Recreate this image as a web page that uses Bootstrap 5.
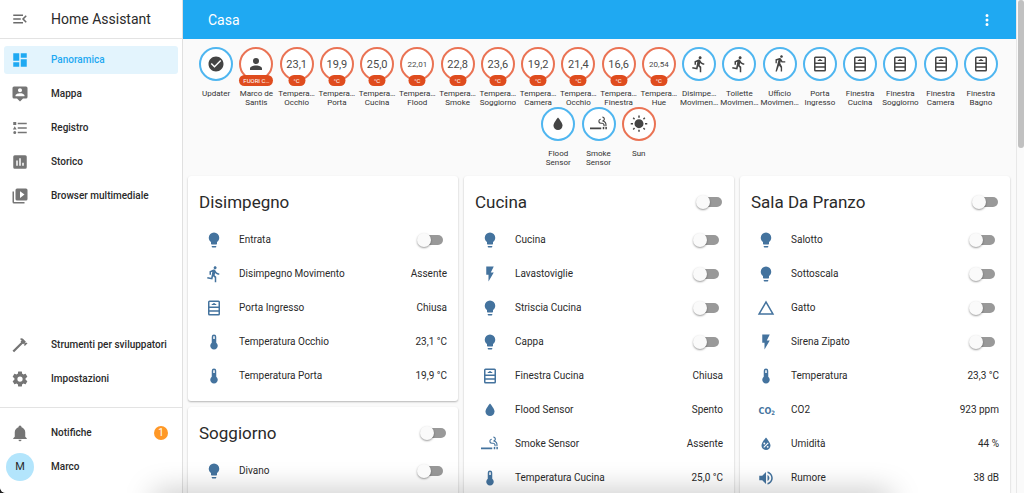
<!DOCTYPE html>
<html lang="it">
<head>
<meta charset="utf-8">
<meta name="viewport" content="width=device-width, initial-scale=1">
<title>Casa – Home Assistant</title>
<link rel="stylesheet" href="https://cdn.jsdelivr.net/npm/bootstrap@5.3.0/dist/css/bootstrap.min.css">
<style>
  :root { --ha-blue: #1fa9f2; --ha-text: #2a2a2a; --ha-icon: #44739e; --ha-red: #df4c1e; }
  body { font: 400 10px/14px Roboto, "Noto Sans", sans-serif; color: var(--ha-text); background: #222; }
  .app { background: #fafafa; border-bottom-left-radius: 6px; }
  .mdi { width: 18px; height: 18px; fill: currentColor; flex: none; }

  .side { width: 183px; flex: none; background: #fff; border-right: 1px solid #e0e0e0; font-weight: 500; }
  .side-top { height: 39px; border-bottom: 1px solid #e3e3e3; padding-left: 11px; gap: 22px; }
  .side-top h1 { font-size: 14px; line-height: 20px; font-weight: 400; margin: 0; }
  .side-top button { color: #6b6b6b; line-height: 0; }
  .side-list { padding: 7px 4px 6px; gap: 6px; }
  .side-foot { border-top: 1px solid #e3e3e3; padding-bottom: 12px; padding-top: 11px; }
  .side-link { height: 28px; padding: 0 7px; gap: 22px; border-radius: 3px; color: var(--ha-text); text-decoration: none; }
  .side-link .mdi { color: #757575; }
  .side-link.active { background: #e3f4fd; color: var(--ha-blue); }
  .side-link.active .mdi { color: var(--ha-blue); }
  .side-link.user { padding-left: 2px; gap: 17px; }
  .avatar { width: 28px; height: 28px; background: #b3e5fc; font-size: 11px; font-weight: 400; }
  .count { width: 14px; height: 14px; margin-right: 3px; background: #ff9826; color: #fff; font-weight: 400; }

  .topbar { height: 39px; background: var(--ha-blue); color: #fff; padding: 0 20px 0 25px; }
  .topbar h2 { font-size: 14px; line-height: 20px; font-weight: 400; margin: 0; }
  .topbar button { color: #fff; line-height: 0; }

  .state-badges { padding: 8px 15px 8px 13px; }
  .state { width: 5%; height: 60px; font-size: 8px; line-height: 9px; text-align: center; color: #333; }
  .ring { width: 34px; height: 34px; border: 2px solid #4fb6f0; background: #fff; color: #4a4a4a; font-size: 11px; margin-bottom: 8px; }
  .ring.warm { border-color: #ea7354; }
  .ring.long { font-size: 8px; }
  .ring .mdi { color: #444; }
  .pill { left: 50%; top: 26px; transform: translateX(-50%); height: 11px; min-width: 17px; padding: 0 4px; border-radius: 6px; background: var(--ha-red); color: #fff; font-size: 6px; line-height: 11px; white-space: nowrap; }

  .boards { padding: 1px 6px 6px 5px; gap: 6px; }
  .board-col { flex: 1 1 0; min-width: 0; gap: 6px; }
  .panel { background: #fff; border-radius: 3px; box-shadow: 0 1px 2px rgba(0,0,0,.28); padding-bottom: 8px; }
  .panel-head { height: 47px; padding: 4px 12px 0 11px; }
  .panel-head h3 { font-size: 17px; line-height: 24px; font-weight: 400; margin: 0; }
  .entity { height: 34px; padding: 0 11px 0 17px; gap: 16px; }
  .entity .mdi { color: var(--ha-icon); }
  .entity .toggle { margin-right: 4px; }

  .toggle { appearance: none; position: relative; width: 26px; height: 14px; margin: 0; border: 0; background: none; flex: none; }
  .toggle::before { content: ""; position: absolute; left: 0; top: 0; width: 14px; height: 14px; border-radius: 50%; background: #fafafa; box-shadow: 0 1px 2px rgba(0,0,0,.4); z-index: 1; }
  .toggle::after { content: ""; position: absolute; left: 2px; right: 0; top: 2px; height: 10px; border-radius: 5px; background: #999; }
  .toggle:checked::before { left: 12px; background: var(--ha-blue); }

  .scroll-track { width: 8px; flex: none; background: #fafafa; border-left: 1px solid #e8e8e8; padding: 0 0 0 1px; }
  .scroll-thumb { height: 30%; background: #c1c1c1; border-radius: 3px; }
  .dock-shade { top: 100%; left: 15%; right: 13%; height: 20px; box-shadow: 0 0 30px rgba(0,0,0,.28); pointer-events: none; }
</style>
</head>
<body>
<svg class="d-none" aria-hidden="true">
  <symbol id="menu" viewBox="0 0 24 24"><path d="M21,15.61L19.59,17L14.58,12L19.59,7L21,8.39L17.44,12L21,15.61M3,6H16V8H3V6M3,13V11H13V13H3M3,18V16H16V18H3Z"/></symbol>
  <symbol id="dashboard" viewBox="0 0 24 24"><path d="M13,3V9H21V3M13,21H21V11H13M3,21H11V15H3M3,13H11V3H3V13Z"/></symbol>
  <symbol id="map" viewBox="0 0 24 24"><path d="M20,2H4A2,2 0 0,0 2,4V16A2,2 0 0,0 4,18H8L12,22L16,18H20A2,2 0 0,0 22,16V4A2,2 0 0,0 20,2M12,4.3C13.5,4.3 14.7,5.5 14.7,7C14.7,8.5 13.5,9.7 12,9.7C10.5,9.7 9.3,8.5 9.3,7C9.3,5.5 10.5,4.3 12,4.3M18,15H6V14.1C6,12.1 10,11 12,11C14,11 18,12.1 18,14.1V15Z"/></symbol>
  <symbol id="list" viewBox="0 0 24 24"><path d="M5,9.5L7.5,14H2.5L5,9.5M3,4H7V8H3V4M5,20A2,2 0 0,0 7,18A2,2 0 0,0 5,16A2,2 0 0,0 3,18A2,2 0 0,0 5,20M9,5V7H21V5H9M9,19H21V17H9V19M9,13H21V11H9V13Z"/></symbol>
  <symbol id="chart" viewBox="0 0 24 24"><path fill-rule="evenodd" d="M5,3H19A2,2 0 0,1 21,5V19A2,2 0 0,1 19,21H5A2,2 0 0,1 3,19V5A2,2 0 0,1 5,3M7,10V17H9V10M11,7V17H13V7M15,13V17H17V13Z"/></symbol>
  <symbol id="media" viewBox="0 0 24 24"><path fill-rule="evenodd" d="M4,6H2V20A2,2 0 0,0 4,22H18V20H4V6M20,2H8A2,2 0 0,0 6,4V16A2,2 0 0,0 8,18H20A2,2 0 0,0 22,16V4A2,2 0 0,0 20,2M12,14.5V5.5L18,10L12,14.5Z"/></symbol>
  <symbol id="hammer" viewBox="0 0 24 24"><path d="M2,19.63L13.43,8.2L12.72,7.5L14.14,6.07L12,3.89C13.2,2.7 15.09,2.7 16.27,3.89L19.87,7.5L18.45,8.91H21.29L22,9.62L18.45,13.21L17.74,12.5V9.62L16.27,11.04L15.56,10.33L4.13,21.76L2,19.63Z"/></symbol>
  <symbol id="cog" viewBox="0 0 24 24"><path d="M12,15.5A3.5,3.5 0 0,1 8.5,12A3.5,3.5 0 0,1 12,8.5A3.5,3.5 0 0,1 15.5,12A3.5,3.5 0 0,1 12,15.5M19.43,12.97C19.47,12.65 19.5,12.33 19.5,12C19.5,11.67 19.47,11.34 19.43,11L21.54,9.37C21.73,9.22 21.78,8.95 21.66,8.73L19.66,5.27C19.54,5.05 19.27,4.96 19.05,5.05L16.56,6.05C16.04,5.66 15.5,5.32 14.87,5.07L14.5,2.42C14.46,2.18 14.25,2 14,2H10C9.75,2 9.54,2.18 9.5,2.42L9.13,5.07C8.5,5.32 7.96,5.66 7.44,6.05L4.95,5.05C4.73,4.96 4.46,5.05 4.34,5.27L2.34,8.73C2.21,8.95 2.27,9.22 2.46,9.37L4.57,11C4.53,11.34 4.5,11.67 4.5,12C4.5,12.33 4.53,12.65 4.57,12.97L2.46,14.63C2.27,14.78 2.21,15.05 2.34,15.27L4.34,18.73C4.46,18.95 4.73,19.03 4.95,18.95L7.44,17.94C7.96,18.34 8.5,18.68 9.13,18.93L9.5,21.58C9.54,21.82 9.75,22 10,22H14C14.25,22 14.46,21.82 14.5,21.58L14.87,18.93C15.5,18.67 16.04,18.34 16.56,17.94L19.05,18.95C19.27,19.03 19.54,18.95 19.66,18.73L21.66,15.27C21.78,15.05 21.73,14.78 21.54,14.63L19.43,12.97Z"/></symbol>
  <symbol id="bell" viewBox="0 0 24 24"><path d="M21,19V20H3V19L5,17V11C5,7.9 7.03,5.17 10,4.29C10,4.19 10,4.1 10,4A2,2 0 0,1 12,2A2,2 0 0,1 14,4C14,4.1 14,4.19 14,4.29C16.97,5.17 19,7.9 19,11V17L21,19M14,21A2,2 0 0,1 12,23A2,2 0 0,1 10,21"/></symbol>
  <symbol id="dots" viewBox="0 0 24 24"><path d="M12,16A2,2 0 0,1 14,18A2,2 0 0,1 12,20A2,2 0 0,1 10,18A2,2 0 0,1 12,16M12,10A2,2 0 0,1 14,12A2,2 0 0,1 12,14A2,2 0 0,1 10,12A2,2 0 0,1 12,10M12,4A2,2 0 0,1 14,6A2,2 0 0,1 12,8A2,2 0 0,1 10,6A2,2 0 0,1 12,4Z"/></symbol>
  <symbol id="check" viewBox="0 0 24 24"><path fill-rule="evenodd" d="M12 2C6.5 2 2 6.5 2 12S6.5 22 12 22 22 17.5 22 12 17.5 2 12 2M10 17L5 12L6.41 10.59L10 14.17L17.59 6.58L19 8L10 17Z"/></symbol>
  <symbol id="account" viewBox="0 0 24 24"><path d="M12,4A4,4 0 0,1 16,8A4,4 0 0,1 12,12A4,4 0 0,1 8,8A4,4 0 0,1 12,4M12,14C16.42,14 20,15.79 20,18V20H4V18C4,15.79 7.58,14 12,14Z"/></symbol>
  <symbol id="run" viewBox="0 0 24 24"><path d="M13.5,5.5C14.59,5.5 15.5,4.58 15.5,3.5C15.5,2.38 14.59,1.5 13.5,1.5C12.39,1.5 11.5,2.38 11.5,3.5C11.5,4.58 12.39,5.5 13.5,5.5M9.89,19.38L10.89,15L13,17V23H15V15.5L12.89,13.5L13.5,10.5C14.79,12 16.79,13 19,13V11C17.09,11 15.5,10 14.69,8.58L13.69,7C13.29,6.38 12.69,6 12,6C11.69,6 11.5,6.08 11.19,6.08L6,8.28V13H8V9.58L9.79,8.88L8.19,17L3.29,16L2.89,18L9.89,19.38Z"/></symbol>
  <symbol id="walk" viewBox="0 0 24 24"><path d="M14.12,10H19V8.2H15.38L13.38,4.87C13.08,4.37 12.54,4.03 11.92,4.03C11.74,4.03 11.58,4.06 11.42,4.11L6,5.8V11H7.8V7.33L9.91,6.67L6,22H7.8L10.67,13.89L13,17V22H14.8V15.59L12.31,11.05L13.04,8.18M14,3.8C15,3.8 15.8,3 15.8,2C15.8,1 15,.2 14,.2C13,.2 12.2,1 12.2,2C12.2,3 13,3.8 14,3.8Z"/></symbol>
  <symbol id="window" viewBox="0 0 24 24"><path fill-rule="evenodd" d="M6,2H18A2,2 0 0,1 20,4V20A2,2 0 0,1 18,22H6A2,2 0 0,1 4,20V4A2,2 0 0,1 6,2M6,4V10H18V4M9,6.5H10.5V5.5H13.5V6.5H15V8H9M6,12V15H18V12M6,17V20H18V17Z"/></symbol>
  <symbol id="water" viewBox="0 0 24 24"><path d="M12,20A6,6 0 0,1 6,14C6,10 12,3.25 12,3.25C12,3.25 18,10 18,14A6,6 0 0,1 12,20Z"/></symbol>
  <symbol id="smoke" viewBox="0 0 24 24"><path d="M0,16.5H15V19H0M20.5,16H22.5V19H20.5V16M17,16H19V19H17V16M18.85,7.73C19.47,7.12 19.85,6.28 19.85,5.35C19.85,3.5 18.35,2 16.5,2V3.5C17.54,3.5 18.35,4.33 18.35,5.35C18.35,6.39 17.54,7.2 16.5,7.2V8.7C18.74,8.7 20.5,10.53 20.5,12.77V15H22V12.76C22,10.54 20.72,8.62 18.85,7.73M16.03,10.2H14.5C13.5,10.2 12.65,9.22 12.65,8.2C12.65,7.15 13.46,6.45 14.5,6.45V4.95C12.65,4.95 11.15,6.45 11.15,8.3A3.35,3.35 0 0,0 14.5,11.65H16.03C17.08,11.65 18,12.39 18,13.7V15H19.5V13.36C19.5,11.55 17.9,10.2 16.03,10.2Z"/></symbol>
  <symbol id="sun" viewBox="0 0 24 24"><path d="M3.55,18.54L4.96,19.95L6.76,18.16L5.34,16.74M11,22.45H13V19.5H11M12,5.5A6,6 0 0,0 6,11.5A6,6 0 0,0 12,17.5A6,6 0 0,0 18,11.5C18,8.18 15.31,5.5 12,5.5M20,12.5H23V10.5H20M17.24,18.16L19.04,19.95L20.45,18.54L18.66,16.74M20.45,4.46L19.04,3.05L17.24,4.84L18.66,6.26M13,0.55H11V3.5H13M4,10.5H1V12.5H4M6.76,4.84L4.96,3.05L3.55,4.46L5.34,6.26L6.76,4.84Z"/></symbol>
  <symbol id="bulb" viewBox="0 0 24 24"><path d="M12,2A7,7 0 0,0 5,9C5,11.38 6.19,13.47 8,14.74V17A1,1 0 0,0 9,18H15A1,1 0 0,0 16,17V14.74C17.81,13.47 19,11.38 19,9A7,7 0 0,0 12,2M9,21A1,1 0 0,0 10,22H14A1,1 0 0,0 15,21V20H9V21Z"/></symbol>
  <symbol id="flash" viewBox="0 0 24 24"><path d="M7,2V13H10V22L17,10H13L17,2H7Z"/></symbol>
  <symbol id="thermo" viewBox="0 0 24 24"><path fill-rule="evenodd" d="M15 13V5A3 3 0 0 0 9 5V13A5 5 0 1 0 15 13M12 4A1 1 0 0 1 13 5V8H11V5A1 1 0 0 1 12 4Z"/></symbol>
  <symbol id="triangle" viewBox="0 0 24 24"><path fill-rule="evenodd" d="M12,2L1,21H23M12,6L19.53,19H4.47"/></symbol>
  <symbol id="humidity" viewBox="0 0 24 24"><path fill-rule="evenodd" d="M12,3.25C12,3.25 6,10 6,14C6,17.32 8.69,20 12,20A6,6 0 0,0 18,14C18,10 12,3.25 12,3.25M14.47,9.97L15.53,11.03L9.53,17.03L8.47,15.97M9.75,10A1.25,1.25 0 0,1 11,11.25A1.25,1.25 0 0,1 9.75,12.5A1.25,1.25 0 0,1 8.5,11.25A1.25,1.25 0 0,1 9.75,10M14.25,14.5A1.25,1.25 0 0,1 15.5,15.75A1.25,1.25 0 0,1 14.25,17A1.25,1.25 0 0,1 13,15.75A1.25,1.25 0 0,1 14.25,14.5Z"/></symbol>
  <symbol id="volume" viewBox="0 0 24 24"><path d="M14,3.23V5.29C16.89,6.15 19,8.83 19,12C19,15.17 16.89,17.84 14,18.7V20.77C18,19.86 21,16.28 21,12C21,7.72 18,4.14 14,3.23M16.5,12C16.5,10.23 15.5,8.71 14,7.97V16C15.5,15.29 16.5,13.76 16.5,12M3,9V15H7L12,20V4L7,9H3Z"/></symbol>
  <symbol id="co2" viewBox="0 0 24 24"><text x="2" y="17" font-family="DejaVu Sans Condensed, Roboto, sans-serif" font-size="12" font-weight="900">CO<tspan font-size="8" dy="1">2</tspan></text></symbol>
</svg>

<div class="app d-flex vh-100 overflow-hidden">
  <aside class="side d-flex flex-column">
    <header class="side-top d-flex align-items-center flex-shrink-0">
      <button type="button" class="btn p-0 border-0" aria-label="Menu"><svg class="mdi"><use href="#menu"/></svg></button>
      <h1>Home Assistant</h1>
    </header>
    <nav class="side-list d-flex flex-column flex-grow-1">
      <a href="#" class="side-link active d-flex align-items-center"><svg class="mdi"><use href="#dashboard"/></svg>Panoramica</a>
      <a href="#" class="side-link d-flex align-items-center"><svg class="mdi"><use href="#map"/></svg>Mappa</a>
      <a href="#" class="side-link d-flex align-items-center"><svg class="mdi"><use href="#list"/></svg>Registro</a>
      <a href="#" class="side-link d-flex align-items-center"><svg class="mdi"><use href="#chart"/></svg>Storico</a>
      <a href="#" class="side-link d-flex align-items-center"><svg class="mdi"><use href="#media"/></svg>Browser multimediale</a>
      <a href="#" class="side-link d-flex align-items-center mt-auto"><svg class="mdi"><use href="#hammer"/></svg>Strumenti per sviluppatori</a>
      <a href="#" class="side-link d-flex align-items-center mb-2"><svg class="mdi"><use href="#cog"/></svg>Impostazioni</a>
    </nav>
    <nav class="side-list side-foot d-flex flex-column">
      <a href="#" class="side-link d-flex align-items-center"><svg class="mdi"><use href="#bell"/></svg>Notifiche<span class="count rounded-circle d-flex align-items-center justify-content-center ms-auto">1</span></a>
      <a href="#" class="side-link user d-flex align-items-center"><span class="avatar rounded-circle d-flex align-items-center justify-content-center">M</span>Marco</a>
    </nav>
  </aside>

  <main class="flex-grow-1 overflow-hidden">
    <header class="topbar d-flex align-items-center justify-content-between">
      <h2>Casa</h2>
      <button type="button" class="btn p-0 border-0" aria-label="Altro"><svg class="mdi"><use href="#dots"/></svg></button>
    </header>
    <section class="state-badges d-flex flex-wrap justify-content-center" id="badges"></section>
    <section class="boards d-flex align-items-start" id="boards"></section>
  </main>
  <div class="scroll-track"><div class="scroll-thumb"></div></div>
</div>
<div class="dock-shade position-fixed"></div>

<script src="https://cdn.jsdelivr.net/npm/bootstrap@5.3.0/dist/js/bootstrap.bundle.min.js"></script>
<script>
  const icon = name => `<svg class="mdi"><use href="#${name}"/></svg>`;

  // [icon or reading, first line, second line, unit or status, warm ring]
  const badges = [
    ['check', 'Updater', ''], ['account', 'Marco de', 'Santis', 'FUORI C…', true],
    ['23,1', 'Tempera…', 'Occhio', '°C', true], ['19,9', 'Tempera…', 'Porta', '°C', true],
    ['25,0', 'Tempera…', 'Cucina', '°C', true], ['22,01', 'Tempera…', 'Flood', '°C', true],
    ['22,8', 'Tempera…', 'Smoke', '°C', true], ['23,6', 'Tempera…', 'Soggiorno', '°C', true],
    ['19,2', 'Tempera…', 'Camera', '°C', true], ['21,4', 'Tempera…', 'Occhio', '°C', true],
    ['16,6', 'Tempera…', 'Finestra', '°C', true], ['20,54', 'Tempera…', 'Hue', '°C', true],
    ['run', 'Disimpe…', 'Movimen…'], ['run', 'Toilette', 'Movimen…'], ['walk', 'Ufficio', 'Movimen…'],
    ['window', 'Porta', 'Ingresso'], ['window', 'Finestra', 'Cucina'], ['window', 'Finestra', 'Soggiorno'],
    ['window', 'Finestra', 'Camera'], ['window', 'Finestra', 'Bagno'],
    ['water', 'Flood', 'Sensor'], ['smoke', 'Smoke', 'Sensor'], ['sun', 'Sun', '', '', true]
  ];
  document.getElementById('badges').innerHTML = badges.map(([face, a, b, unit, warm]) => `
    <div class="state d-flex flex-column align-items-center">
      <div class="ring rounded-circle position-relative flex-shrink-0 d-flex align-items-center justify-content-center ${warm ? 'warm' : ''} ${/^\d/.test(face) && face.length > 4 ? 'long' : ''}">
        ${/^\d/.test(face) ? face : icon(face)}
        ${unit ? `<span class="pill position-absolute">${unit}</span>` : ''}
      </div>
      <div class="text-nowrap">${a}</div><div class="text-nowrap">${b}</div>
    </div>`).join('');

  // Entities without a reading are switches.
  const columns = [
    [
      { title: 'Disimpegno', rows: [['bulb', 'Entrata'], ['run', 'Disimpegno Movimento', 'Assente'], ['window', 'Porta Ingresso', 'Chiusa'], ['thermo', 'Temperatura Occhio', '23,1 °C'], ['thermo', 'Temperatura Porta', '19,9 °C']] },
      { title: 'Soggiorno', master: true, rows: [['bulb', 'Divano']] }
    ],
    [{ title: 'Cucina', master: true, rows: [['bulb', 'Cucina'], ['flash', 'Lavastoviglie'], ['bulb', 'Striscia Cucina'], ['bulb', 'Cappa'], ['window', 'Finestra Cucina', 'Chiusa'], ['water', 'Flood Sensor', 'Spento'], ['smoke', 'Smoke Sensor', 'Assente'], ['thermo', 'Temperatura Cucina', '25,0 °C']] }],
    [{ title: 'Sala Da Pranzo', master: true, rows: [['bulb', 'Salotto'], ['bulb', 'Sottoscala'], ['triangle', 'Gatto'], ['flash', 'Sirena Zipato'], ['thermo', 'Temperatura', '23,3 °C'], ['co2', 'CO2', '923 ppm'], ['humidity', 'Umidità', '44 %'], ['volume', 'Rumore', '38 dB']] }]
  ];
  let n = 0;
  const row = ([ic, name, value]) => {
    const id = 'e' + (++n);
    return `<li class="entity d-flex align-items-center">${icon(ic)}` + (value
      ? `<span class="flex-grow-1">${name}</span><span>${value}</span>`
      : `<label class="flex-grow-1" for="${id}">${name}</label><input class="toggle" type="checkbox" role="switch" id="${id}">`) + '</li>';
  };
  document.getElementById('boards').innerHTML = columns.map(cards => `
    <div class="board-col d-flex flex-column">${cards.map(c => `
      <article class="panel">
        <div class="panel-head d-flex align-items-center justify-content-between">
          <h3>${c.title}</h3>${c.master ? `<input class="toggle" type="checkbox" role="switch" aria-label="${c.title}">` : ''}
        </div>
        <ul class="list-unstyled mb-0">${c.rows.map(row).join('')}</ul>
      </article>`).join('')}
    </div>`).join('');
</script>
</body>
</html>
